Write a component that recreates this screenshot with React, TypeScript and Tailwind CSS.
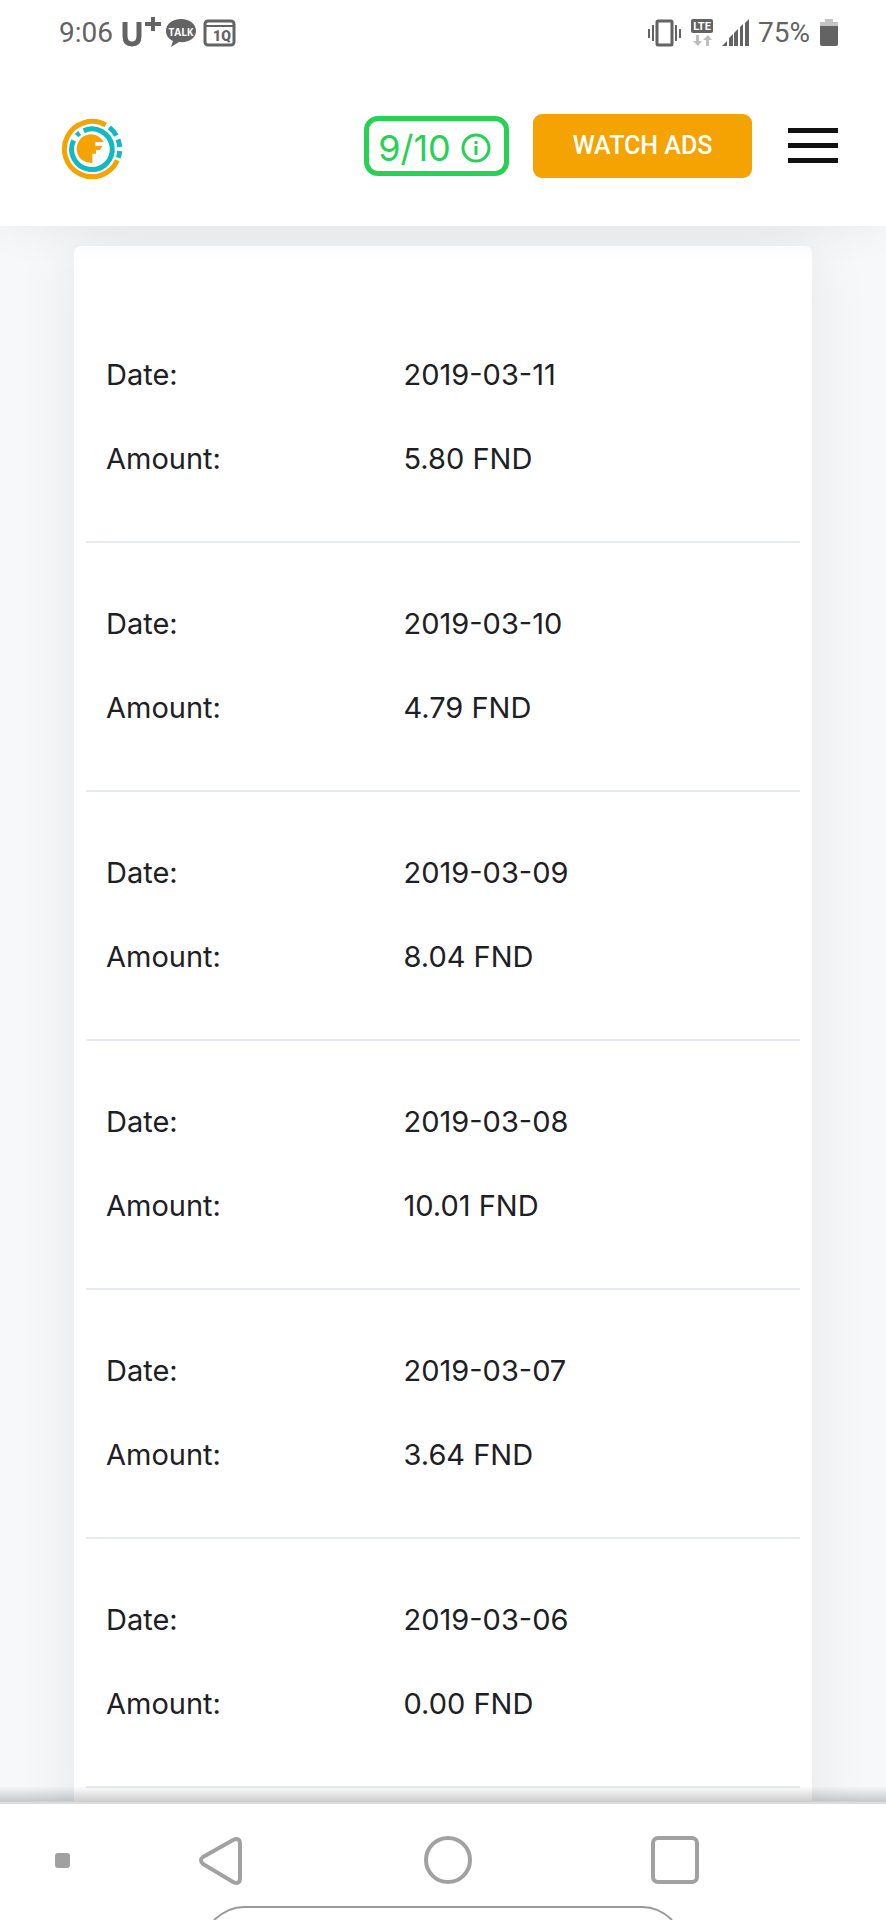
import React from 'react';

const records = [
  { date: '2019-03-11', amount: '5.80 FND' },
  { date: '2019-03-10', amount: '4.79 FND' },
  { date: '2019-03-09', amount: '8.04 FND' },
  { date: '2019-03-08', amount: '10.01 FND' },
  { date: '2019-03-07', amount: '3.64 FND' },
  { date: '2019-03-06', amount: '0.00 FND' },
];

const StatusBar: React.FC = () => (
  <div className="flex h-[66px] shrink-0 items-center justify-between pl-[59px] pr-12 font-['Roboto',sans-serif] text-[28px] text-[#636363]">
    <div className="flex items-center">
      <span className="w-[62px]">9:06</span>
      <svg className="h-8 w-10" viewBox="0 0 40 32" fill="none" stroke="#636363">
        <path d="M4 5v14q0 8 7 8t7-8V5" strokeWidth="5" />
        <path d="M32 0v14M24 7h16" strokeWidth="4" />
      </svg>
      <svg className="ml-1 h-8 w-8" viewBox="0 0 32 32">
        <path d="M16 2C7 2 1 7 1 14c0 5 3 8 7 10l-2 6 8-5c10 1 17-4 17-11S25 2 16 2z" fill="#636363" />
        <text x="16" y="19" textAnchor="middle" fontSize="10" fontWeight="700" fill="#fff" fontFamily="Open Sans, sans-serif">TALK</text>
      </svg>
      <svg className="ml-1.5 h-8 w-[33px]" viewBox="0 0 33 32">
        <rect x="2" y="4" width="29" height="24" rx="3" fill="none" stroke="#636363" strokeWidth="3" />
        <path d="M2 9h29" stroke="#636363" strokeWidth="2" />
        <text x="19" y="24" textAnchor="middle" fontSize="14" fontWeight="900" fill="#636363" fontFamily="Roboto, sans-serif">1Q</text>
      </svg>
    </div>
    <div className="flex items-center">
      <svg className="h-8 w-[34px]" viewBox="0 0 34 32" fill="none" stroke="#636363">
        <rect x="10" y="4" width="15" height="24" rx="1" strokeWidth="3" />
        <path d="M2 12v9M6 8v16M29 8v16M33 12v9" strokeWidth="2" />
      </svg>
      <svg className="ml-2.5 h-8 w-[23px]" viewBox="0 0 23 32">
        <rect x="0" y="2" width="22" height="14" rx="2" fill="#636363" />
        <text x="11" y="13" textAnchor="middle" fontSize="11" fontWeight="700" fill="#fff" fontFamily="Roboto, sans-serif">LTE</text>
        <path d="M5 18h3v6h3l-4 5-5-5h3zM15 29h3v-6h3l-4-5-5 5h3z" fill="#bdbdbd" />
      </svg>
      <svg className="ml-2 h-8 w-7" viewBox="0 0 28 32" fill="#636363">
        <path d="M0 29l5-5v5zM7 29v-8l4-4v12zM12 29V16l4-4v17zM18 29V10l3-3v22zM23 29V6l4-4v27z" />
      </svg>
      <span className="ml-2 w-[54px]">75%</span>
      <svg className="ml-2 h-8 w-[18px]" viewBox="0 0 18 32">
        <path d="M5 2h8v3h5v5H0V5h5z" fill="#c4c4c4" />
        <path d="M0 9h18v18q0 2-2 2H2q-2 0-2-2z" fill="#636363" />
      </svg>
    </div>
  </div>
);

const Logo: React.FC = () => (
  <svg className="h-[62px] w-[62px]" viewBox="-93 -93 186 186" fill="none" strokeWidth="15">
    <path d="M41-72A83 83 0 1 0 76 34" stroke="#f5a203" />
    <path d="M52-65A83 83 0 0 1 73-40M78-29A83 83 0 0 1 83-6M83 6A83 83 0 0 1 79 26" stroke="#12b9c4" />
    <path d="M-25-55A61 61 0 1 1-55-26" stroke="#12b9c4" />
    <path d="M-46-40A61 61 0 0 1-37-48" stroke="#12b9c4" />
    <path d="M35-21H10V-9H1V42A43 43 0 1 1 35-21z" fill="#f5a203" />
    <path d="M0-9H31L24 3H12V14H0z" fill="#f5a203" />
  </svg>
);

const Header: React.FC = () => (
  <header className="relative z-10 flex h-40 shrink-0 items-start bg-white pl-[61px] pr-12 shadow-[0_0_50px_-6px_rgba(0,0,0,0.09)]">
    <a href="#home" aria-label="Home" className="mt-[52px]">
      <Logo />
    </a>
    <div className="ml-auto flex items-start">
      <button className="mt-[50px] flex h-[60px] w-[145px] items-center justify-center gap-2.5 rounded-[14px] border-[5px] border-[#28d154] pr-1 pt-1 text-[36px] text-[#28d154]">
        <span>9/10</span>
        <svg className="h-[30px] w-[30px]" viewBox="0 0 30 30" fill="none" stroke="currentColor">
          <circle cx="15" cy="15" r="13" strokeWidth="3" />
          <path d="M15 13v9M15 8v3" strokeWidth="3" />
        </svg>
      </button>
      <button className="ml-6 mt-12 h-16 w-[219px] rounded-[9px] bg-[#f5a203] font-['Roboto',sans-serif] text-[25px] font-medium text-white">
        WATCH ADS
      </button>
      <button aria-label="Menu" className="ml-9 mt-[62px] flex w-[50px] flex-col gap-2.5">
        <span className="h-[5px] w-full bg-[#111]" />
        <span className="h-[5px] w-full bg-[#111]" />
        <span className="h-[5px] w-full bg-[#111]" />
      </button>
    </div>
  </header>
);

const NavBar: React.FC = () => (
  <nav className="relative z-10 flex h-[119px] shrink-0 items-start border-t border-white bg-white pl-[55px]">
    <div className="absolute inset-x-0 top-0 h-0.5 bg-[#dcdcdc]" />
    <div className="absolute inset-x-0 bottom-full h-4 bg-linear-to-t from-black/20 to-transparent" />
    <button aria-label="Toggle bar" className="mt-[51px] h-[15px] w-[15px] rounded-[3px] bg-[#a1a1a1]" />
    <button aria-label="Back" className="ml-[129px] mt-[34px]">
      <svg className="h-[50px] w-[46px]" viewBox="0 0 46 50" fill="none" stroke="#a1a1a1" strokeWidth="4">
        <path d="M4 21L34 4Q41 1 41 8V42Q41 49 34 46L4 28Q0 24 4 21z" />
      </svg>
    </button>
    <button aria-label="Home" className="ml-[179px] mt-[34px] h-12 w-12 rounded-full border-4 border-[#a1a1a1]" />
    <button aria-label="Recent apps" className="ml-[179px] mt-[34px] h-12 w-12 rounded-[7px] border-4 border-[#a1a1a1]" />
    <svg className="absolute bottom-0 left-[212px] h-4 w-[462px]" viewBox="0 0 462 16" fill="none">
      <path d="M2 16Q16 3 32 3H430Q447 3 460 16" stroke="#999" strokeWidth="2" />
    </svg>
  </nav>
);

export default function App() {
  return (
    <div className="flex h-screen flex-col bg-[#f6f8fa] font-['Inter',sans-serif] text-[#1c2025]">
      <div className="relative z-20 bg-white">
        <StatusBar />
      </div>
      <Header />
      <main className="min-h-0 flex-1 overflow-y-auto px-[74px] pt-5 [scrollbar-width:none]">
        <div className="rounded-[7px] bg-white px-3 pb-12 pt-12 shadow-[0_0_60px_rgba(0,0,0,0.08)]">
          {records.map((record) => (
            <dl
              key={record.date}
              className="grid grid-cols-[5fr_7fr] border-b-2 border-[#e6eaf0] pb-10 pt-[39px] text-[29px] leading-[84px]"
            >
              <dt className="px-5">Date:</dt>
              <dd className="px-5">{record.date}</dd>
              <dt className="px-5">Amount:</dt>
              <dd className="px-5">{record.amount}</dd>
            </dl>
          ))}
        </div>
      </main>
      <NavBar />
    </div>
  );
}
